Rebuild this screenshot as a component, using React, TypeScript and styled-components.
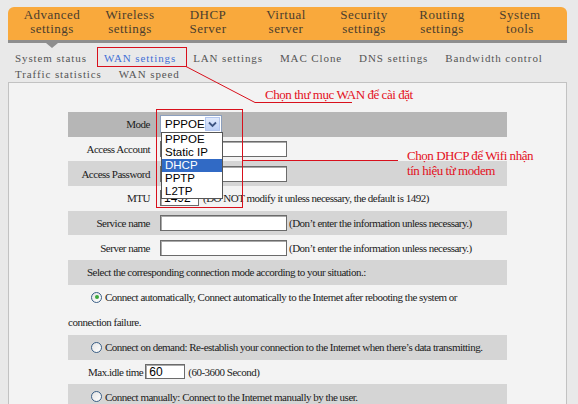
import React from 'react';
import styled, { createGlobalStyle, css } from 'styled-components';

const GlobalStyle = createGlobalStyle`
  html, body {
    margin: 0;
    padding: 0;
    background: #e9e9e9;
  }
  body {
    font-family: 'Liberation Serif', 'Times New Roman', serif;
  }
`;

const topMenu = [
  ['Advanced', 'settings'],
  ['Wireless', 'settings'],
  ['DHCP', 'Server'],
  ['Virtual', 'server'],
  ['Security', 'settings'],
  ['Routing', 'settings'],
  ['System', 'tools'],
];

const subMenu = [
  'System status',
  'WAN settings',
  'LAN settings',
  'MAC Clone',
  'DNS settings',
  'Bandwidth control',
  'Traffic statistics',
  'WAN speed',
];

const modes = ['PPPOE', 'Static IP', 'DHCP', 'PPTP', 'L2TP'];

const App = () => {
  return (
    <>
      <GlobalStyle />
      <Page>
        <TopMenu>
          {topMenu.map(([a, b], i) => (
            <MenuItem key={a} $active={i === 0}>
              {a}
              <br />
              {b}
            </MenuItem>
          ))}
        </TopMenu>

        <SubMenu>
          {subMenu.map((s) => (
            <SubItem key={s} $active={s === 'WAN settings'}>
              {s}
            </SubItem>
          ))}
        </SubMenu>

        <Panel>
          <FormTable>
            <Row $tone='dark'>
              <Label>Mode</Label>
              <Value>
                <Select>
                  PPPOE
                  <SelectArrow>
                    <svg width='9' height='7' viewBox='0 0 9 7'>
                      <path d='M1 1.5 L4.5 5 L8 1.5' fill='none' stroke='#3e5582' strokeWidth='1.8' />
                    </svg>
                  </SelectArrow>
                  <DropList>
                    {modes.map((m) => (
                      <DropItem key={m} $selected={m === 'DHCP'}>
                        {m}
                      </DropItem>
                    ))}
                  </DropList>
                </Select>
              </Value>
            </Row>
            <Row>
              <Label>Access Account</Label>
              <Value>
                <Field $w={127} readOnly />
              </Value>
            </Row>
            <Row $tone='mid'>
              <Label>Access Password</Label>
              <Value>
                <Field $w={127} type='password' readOnly />
              </Value>
            </Row>
            <Row>
              <Label>MTU</Label>
              <Value>
                <Field $w={39} defaultValue='1492' readOnly />
                <Hint $gap={4}>(DO NOT modify it unless necessary, the default is 1492)</Hint>
              </Value>
            </Row>
            <Row $tone='mid'>
              <Label>Service name</Label>
              <Value>
                <Field $w={127} readOnly />
                <Hint $gap={2}>(Don’t enter the information unless necessary.)</Hint>
              </Value>
            </Row>
            <Row>
              <Label>Server name</Label>
              <Value>
                <Field $w={127} readOnly />
                <Hint $gap={2}>(Don’t enter the information unless necessary.)</Hint>
              </Value>
            </Row>
            <Row $tone='mid' $indent={19}>
              Select the corresponding connection mode according to your situation.:
            </Row>
            <WrapRow>
              <Radio $checked />
              Connect automatically, Connect automatically to the Internet after rebooting the system or
              <br />
              connection failure.
            </WrapRow>
            <Row $tone='mid' $indent={23}>
              <Radio />
              Connect on demand: Re-establish your connection to the Internet when there’s data transmitting.
            </Row>
            <Row $indent={20}>
              Max.idle time
              <Field $w={40} $h={15} defaultValue='60' readOnly style={{ marginLeft: 2 }} />
              <Hint $gap={3}>(60-3600 Second)</Hint>
            </Row>
            <Row $tone='mid' $indent={23}>
              <Radio />
              Connect manually: Connect to the Internet manually by the user.
            </Row>
          </FormTable>
        </Panel>

        <Overlay width='578' height='404' viewBox='0 0 578 404'>
          <g fill='none' stroke='#d8101c' strokeWidth='1'>
            <rect x='97.5' y='47.5' width='89' height='19' />
            <polyline points='186,66.5 255,102.5 352,102.5' />
            <rect x='156.5' y='109.5' width='86' height='98' />
            <line x1='243' y1='160.5' x2='398' y2='160.5' />
          </g>
        </Overlay>
        <Note $x={265} $y={87}>Chọn thư mục WAN để cài đặt</Note>
        <Note $x={407} $y={148}>
          Chọn DHCP để Wifi nhận
          <br />
          tín hiệu từ modem
        </Note>
      </Page>
    </>
  );
};

const Page = styled.div`
  position: relative;
  width: 578px;
  height: 404px;
  overflow: hidden;
  box-sizing: border-box;
  padding-top: 7px;
  display: flex;
  flex-direction: column;
`;

const TopMenu = styled.nav`
  display: flex;
  flex-shrink: 0;
  height: 36px;
  box-sizing: border-box;
  margin: 0 11px 0 8px;
  padding: 1px 0 0 5px;
  background: #f9a93c;
  border-radius: 6px 6px 0 0;
  border-bottom: 3px solid #8e8e8e;
`;

const MenuItem = styled.div<{ $active?: boolean }>`
  position: relative;
  width: 78px;
  text-align: center;
  font-size: 13px;
  line-height: 14px;
  letter-spacing: 0.5px;
  color: #4a3d2e;

  ${({ $active }) =>
    $active &&
    css`
      &::after {
        content: '';
        position: absolute;
        left: 50%;
        top: 35px;
        margin-left: -6px;
        border-left: 6px solid transparent;
        border-right: 6px solid transparent;
        border-top: 5px solid #8e8e8e;
      }
    `}
`;

const SubMenu = styled.div`
  display: flex;
  flex-wrap: wrap;
  flex-shrink: 0;
  column-gap: 17px;
  margin: 0 11px 0 8px;
  padding: 7px 0 0 7px;
  font-size: 11px;
  line-height: 16px;
  letter-spacing: 0.9px;
  color: #555;
`;

const SubItem = styled.span<{ $active?: boolean }>`
  color: ${({ $active }) => ($active ? '#3f6fd6' : '#555')};
  white-space: nowrap;
`;

const Panel = styled.main`
  flex: 1;
  margin: 0 11px 0 8px;
  border: 1px solid #c2c2c2;
  border-bottom: none;
  background: #f3f3f3;
  padding-top: 29px;
`;

const FormTable = styled.div`
  width: 439px;
  margin: 0 auto;
  font-size: 11px;
  letter-spacing: -0.5px;
  color: #1b1b1b;
`;

const tones = {
  dark: '#b6b6b6',
  mid: '#d5d5d5',
  none: 'transparent',
};

const Row = styled.div<{ $tone?: 'dark' | 'mid' | 'none'; $indent?: number }>`
  display: flex;
  align-items: center;
  height: 24.7px;
  box-sizing: border-box;
  padding-left: ${({ $indent = 0 }) => $indent}px;
  background: ${({ $tone = 'none' }) => tones[$tone]};
  white-space: nowrap;
`;

const WrapRow = styled.div`
  line-height: 25px;
  text-indent: 23px;
  white-space: nowrap;
`;

const Label = styled.div`
  width: 87px;
  box-sizing: border-box;
  padding-right: 5px;
  text-align: right;
`;

const Value = styled.div`
  display: flex;
  align-items: center;
  padding-left: 5px;
`;

const Field = styled.input<{ $w: number; $h?: number }>`
  width: ${({ $w }) => $w}px;
  height: ${({ $h = 16 }) => $h}px;
  box-sizing: border-box;
  margin: 0;
  padding: 0 3px;
  border: 1px solid #6b6b6b;
  box-shadow: inset 1px 1px 0 #a9a9a9;
  background: #fff;
  font: 12px 'Liberation Sans', Arial, sans-serif;
  color: #000;
  outline: none;
`;

const Hint = styled.span<{ $gap: number }>`
  margin-left: ${({ $gap }) => $gap}px;
`;

const Select = styled.div`
  position: relative;
  width: 62px;
  height: 18px;
  box-sizing: border-box;
  display: flex;
  align-items: center;
  padding-left: 4px;
  border: 1px solid #8c9fbd;
  background: #fff;
  font: 11.5px 'Liberation Sans', Arial, sans-serif;
  letter-spacing: 0;
  color: #000;
`;

const SelectArrow = styled.span`
  position: absolute;
  right: 1px;
  top: 1px;
  bottom: 1px;
  width: 13px;
  display: flex;
  align-items: center;
  justify-content: center;
  border: 1px solid #b2c5ee;
  background: linear-gradient(#e2ebfd, #bccff6);
`;

const DropList = styled.div`
  position: absolute;
  left: 0;
  top: 16px;
  width: 62px;
  box-sizing: border-box;
  border: 1px solid #555;
  background: #fff;
  z-index: 2;
`;

const DropItem = styled.div<{ $selected?: boolean }>`
  height: 13px;
  line-height: 13px;
  padding-left: 3px;
  color: ${({ $selected }) => ($selected ? '#fff' : '#000')};
  background: ${({ $selected }) => ($selected ? '#316ac5' : 'transparent')};
`;

const Radio = styled.span<{ $checked?: boolean }>`
  position: relative;
  display: inline-block;
  width: 11px;
  height: 11px;
  box-sizing: border-box;
  margin-right: 3px;
  text-indent: 0;
  vertical-align: -2px;
  border: 1px solid #3a5f86;
  border-radius: 50%;
  background: linear-gradient(135deg, #e4e4e4, #fff);

  ${({ $checked }) =>
    $checked &&
    css`
      &::after {
        content: '';
        position: absolute;
        left: 2.5px;
        top: 2.5px;
        width: 4px;
        height: 4px;
        border-radius: 50%;
        background: #3aa83a;
      }
    `}
`;

const Overlay = styled.svg`
  position: absolute;
  left: 0;
  top: 0;
  pointer-events: none;
  z-index: 3;
`;

const Note = styled.div<{ $x: number; $y: number }>`
  position: absolute;
  left: ${({ $x }) => $x}px;
  top: ${({ $y }) => $y}px;
  z-index: 3;
  font-size: 13px;
  line-height: 15px;
  letter-spacing: -0.45px;
  color: #e3101c;
  white-space: nowrap;
`;

export default App;
